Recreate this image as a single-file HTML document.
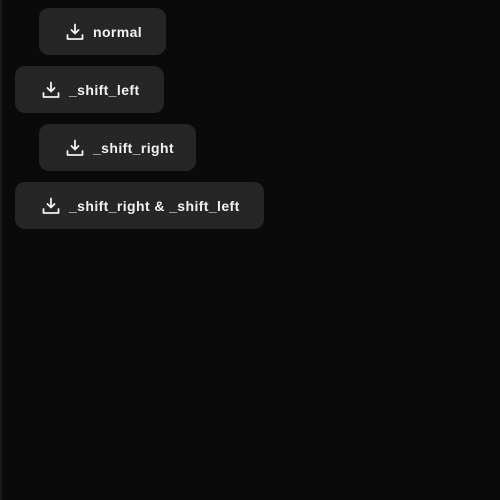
<!DOCTYPE html>
<html><head><style>
html,body{margin:0;padding:0;background:#0a0a0a;width:500px;height:500px;overflow:hidden;border-left:1px solid #1a1a1a;box-sizing:border-box}
.b{position:absolute;height:47px;background:#262626;border-radius:10px;color:#f2f2f2;font:bold 14px "Liberation Sans",sans-serif;letter-spacing:0.4px;display:flex;align-items:center;box-sizing:border-box;padding-left:27px}
.b svg{margin-right:9px}
</style></head><body>
<div class="b" style="left:39px;top:8px;width:127px"><svg width="18" height="18" viewBox="0 0 18 18" fill="none" stroke="#f2f2f2" stroke-width="1.8" stroke-linecap="round" stroke-linejoin="round"><path d="M9 1.5v9M5.5 7l3.5 3.5L12.5 7M1.5 12v4h15v-4"/></svg>normal</div>
<div class="b" style="left:15px;top:66px;width:149px"><svg width="18" height="18" viewBox="0 0 18 18" fill="none" stroke="#f2f2f2" stroke-width="1.8" stroke-linecap="round" stroke-linejoin="round"><path d="M9 1.5v9M5.5 7l3.5 3.5L12.5 7M1.5 12v4h15v-4"/></svg>_shift_left</div>
<div class="b" style="left:39px;top:124px;width:157px"><svg width="18" height="18" viewBox="0 0 18 18" fill="none" stroke="#f2f2f2" stroke-width="1.8" stroke-linecap="round" stroke-linejoin="round"><path d="M9 1.5v9M5.5 7l3.5 3.5L12.5 7M1.5 12v4h15v-4"/></svg>_shift_right</div>
<div class="b" style="left:15px;top:182px;width:249px"><svg width="18" height="18" viewBox="0 0 18 18" fill="none" stroke="#f2f2f2" stroke-width="1.8" stroke-linecap="round" stroke-linejoin="round"><path d="M9 1.5v9M5.5 7l3.5 3.5L12.5 7M1.5 12v4h15v-4"/></svg>_shift_right &amp; _shift_left</div>
</body></html>
